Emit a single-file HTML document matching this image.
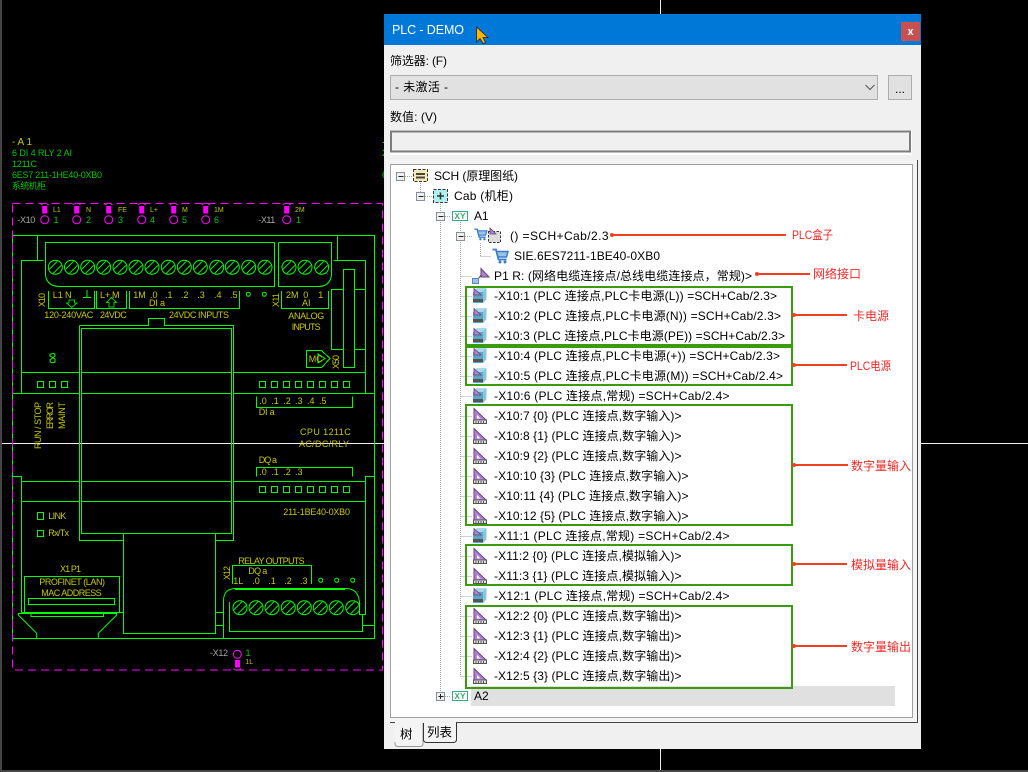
<!DOCTYPE html>
<html><head><meta charset="utf-8"><title>PLC - DEMO</title>
<style>
html,body{margin:0;padding:0;background:#000;width:1028px;height:772px;overflow:hidden}
svg{display:block;position:absolute;left:0;top:0}
text{font-family:"Liberation Sans","Noto Sans CJK SC",sans-serif}
.c text{font-size:9px}
.y{fill:#c8c800}
.g{fill:#00c800}
.t text{font-size:12px;fill:#000}
.r text{font-size:12px;fill:#f02828}
</style></head><body>
<svg width="1028" height="772" viewBox="0 0 1028 772" xmlns="http://www.w3.org/2000/svg">
<defs>
<g id="sc"><circle r="7" fill="none" stroke="#0f0"/><path d="M-6 2L2-6M-2 6L6-2" stroke="#0f0" fill="none"/></g>
<g id="tri"><path d="M1 .5L13 12H1Z" fill="#b57fd6" stroke="#5b4a70"/><path d="M4 7L7.500 10.500H4Z" fill="#fff"/><rect x=".5" y="12" width="13" height="3.500" fill="#e0e0e0" stroke="#555"/><path d="M3 13v2M5.500 13v2M8 13v2M10.500 13v2" stroke="#555"/></g>
<g id="cube"><path d="M0 4L4 0H13.500V11L10 15H0Z" fill="#5aa6c6"/><path d="M0 4L4 0H13.500L10 4Z" fill="#a8d8ea"/><path d="M10 4L13.500 0V11L10 15Z" fill="#8cc4dc"/><path d="M1 .5L8 7H1Z" fill="#b57fd6" stroke="#5b4a70" stroke-width=".8"/><rect x="0" y="11" width="10" height="3" fill="#555"/></g>
<g id="cart"><path d="M.5 1.500H4L6.500 11.500H14.500" fill="none" stroke="#3c7cc4" stroke-width="1.800"/><path d="M4.500 3.500H16L14.500 9H6Z" fill="#9cc2ea" stroke="#3c7cc4" stroke-width="1.500"/><circle cx="8" cy="14" r="1.500" fill="#3c7cc4"/><circle cx="13" cy="14" r="1.500" fill="#3c7cc4"/></g>
<g id="mn"><rect x="-4" y="-4" width="8" height="8" fill="#f0f0f0" stroke="#8a8f96"/><path d="M-2 0H3" stroke="#222"/></g>
<g id="pin"><path d="M-4 1Q0-2.500 4 1" fill="none" stroke="#f0f"/><rect x="-2.500" y="2" width="5" height="7.500" fill="#f0f"/><circle cy="15.700" r="4" fill="none" stroke="#f0f"/></g>
</defs>
<rect width="1028" height="772" fill="#000"/>
<rect width="2" height="772" fill="#454545"/>
<rect y="770" width="1028" height="2" fill="#454545"/>
<path d="M2 443.500H1028M660.500 0V770" stroke="#f0f0f0"/>

<!-- CAD drawing -->
<g class="c" shape-rendering="crispEdges">
<g fill="none" stroke="#0f0">
<path d="M12.500 235.500H374.500V638.500H12.500Z"/>
<path d="M37.500 235.500V260.500M337.500 235.500V260.500"/>
<path d="M43.500 260.500H21.500V393.500M333.500 260.500H365.500V393.500"/>
<path d="M21.500 372.500H79.500M81.500 372.500H231.500M233.500 372.500H365.500"/>
<path d="M12.500 393.500H79.500M81.500 393.500H231.500M233.500 393.500H374.500"/>
<path d="M79.500 325.500H148.500V318.500H164.500V325.500H233.500V540.500H215.500M123.500 540.500H79.500V325.500"/>
<rect x="81.500" y="328.500" width="150" height="205"/>
<path d="M123.500 533.500V633.500H215.500V533.500"/>
<path d="M12.500 476.500H21.500V612.500M374.500 476.500H365.500V614.500H359.500"/>
<path d="M21.500 481.500H79.500M81.500 481.500H231.500M233.500 481.500H365.500M21.500 501.500H79.500M81.500 501.500H231.500M233.500 501.500H365.500"/>
<path d="M274.500 242.500H45.500V275"/><path d="M274.500 242.500V286.500H57"/>
<path d="M278.500 242.500H331.500V275M278.500 242.500V286.500H320"/>
<path d="M48.500 291V308.500H94.500V291M96.500 291V308.500H126.500V291M129.500 291V308.500H239.500V291M281.500 291V308.500H328.500V291"/>
<path d="M87 290V298M83 297.500H91"/>
<rect x="343.500" y="269.500" width="11" height="98"/>
<path d="M343.500 289.500H331.500V349.500H343.500M354.500 289.500H365.500M354.500 349.500H365.500"/>
<path d="M306.500 350.500H321.500L330 358.500L321.500 367.500H306.500Z"/>
<rect x="37.500" y="381.500" width="6" height="6"/><rect x="49.500" y="381.500" width="6" height="6"/><rect x="61.500" y="381.500" width="6" height="6"/>
<rect x="259.500" y="381.500" width="6" height="6"/><rect x="271.500" y="381.500" width="6" height="6"/><rect x="283.500" y="381.500" width="6" height="6"/><rect x="295.500" y="381.500" width="6" height="6"/><rect x="307.500" y="381.500" width="6" height="6"/><rect x="319.500" y="381.500" width="6" height="6"/><rect x="331.500" y="381.500" width="6" height="6"/><rect x="343.500" y="381.500" width="6" height="6"/>
<rect x="259.500" y="486.500" width="6" height="6"/><rect x="271.500" y="486.500" width="6" height="6"/><rect x="283.500" y="486.500" width="6" height="6"/><rect x="295.500" y="486.500" width="6" height="6"/><rect x="307.500" y="486.500" width="6" height="6"/><rect x="319.500" y="486.500" width="6" height="6"/><rect x="331.500" y="486.500" width="6" height="6"/><rect x="343.500" y="486.500" width="6" height="6"/>
<path d="M256.500 396.500V407.500H352.500V396.500M256.500 476.500V467.500H352.500V476.500"/>
<rect x="37.500" y="512.500" width="6" height="7"/><rect x="37.500" y="530.500" width="6" height="6"/>
<path d="M24.500 612V576.500H119.500V612"/>
<rect x="28.500" y="598.500" width="86" height="6"/>
<path d="M21.500 612.500H123.500M215.500 612.500H223.500M215.500 625.500H223.500M223.500 638.500V600"/>
<path d="M229.500 602V631.500H362.500V615M362.500 625.500H374.500"/>
<path d="M232.500 584V565.500H311.500V584"/>
<path d="M235 589.500H345"/>
<path d="M31 613.500V616.500H103.500V613.500"/>
<path d="M18 613.500H117"/>
</g>
<g fill="none" stroke="#0f0" shape-rendering="auto">
<path d="M45.500 275Q47 286.500 60 286.500M331.500 275Q330 286.500 318 286.500M223.500 600Q224 588.500 236 588.500H346Q358 588.500 359.500 602V615"/>
<path d="M18.300 615L36.700 633.300V638.500M116.700 615L98.300 633.300V638.500M18.300 615V613.500M116.700 615V613.500"/>
<path d="M69 300H74.500V303H77L71.700 307.500L66.500 303H69ZM109 307V302.500H106.500L111.500 297.500L116.500 302.500H114V307Z" stroke-width=".8"/>
<circle cx="248.300" cy="294.300" r="2"/><circle cx="264.300" cy="294.300" r="2"/>
<circle cx="320.700" cy="580.300" r="2"/><circle cx="336.700" cy="580.300" r="2"/><circle cx="352.700" cy="580.300" r="2"/>
<path d="M318 354L325 358.500L318 363Z"/>
<path d="M50 354.500Q55 352 55 356L50 360Q50 364 55 362V359L50 356Z" stroke-width="1"/>
</g>
<g shape-rendering="auto">
<use href="#sc" x="55.300" y="267.300"/><use href="#sc" x="71.500" y="267.300"/><use href="#sc" x="87.700" y="267.300"/><use href="#sc" x="103.700" y="267.300"/><use href="#sc" x="120" y="267.300"/><use href="#sc" x="136" y="267.300"/><use href="#sc" x="152" y="267.300"/><use href="#sc" x="168.300" y="267.300"/><use href="#sc" x="184.300" y="267.300"/><use href="#sc" x="200.300" y="267.300"/><use href="#sc" x="216.700" y="267.300"/><use href="#sc" x="232.300" y="267.300"/><use href="#sc" x="248.700" y="267.300"/><use href="#sc" x="265" y="267.300"/>
<use href="#sc" x="289" y="267.300"/><use href="#sc" x="305" y="267.300"/><use href="#sc" x="321.700" y="267.300"/>
<use href="#sc" x="240" y="607.700"/><use href="#sc" x="256" y="607.700"/><use href="#sc" x="272" y="607.700"/><use href="#sc" x="288.300" y="607.700"/><use href="#sc" x="304.300" y="607.700"/><use href="#sc" x="320.300" y="607.700"/><use href="#sc" x="336.300" y="607.700"/><use href="#sc" x="352.700" y="607.700"/>
<use href="#pin" x="44.700" y="204"/><use href="#pin" x="76.700" y="204"/><use href="#pin" x="108.700" y="204"/><use href="#pin" x="141.700" y="204"/><use href="#pin" x="173.700" y="204"/><use href="#pin" x="205.700" y="204"/><use href="#pin" x="286.700" y="204"/>
<circle cx="237.300" cy="654.300" r="4" fill="none" stroke="#f0f"/><rect x="235" y="660" width="5" height="7.500" fill="#f0f"/><path d="M233.500 668.500Q237.300 672 241 668.500" fill="none" stroke="#f0f"/>
</g>
<path d="M12.500 203.500H382.500V670H12.500Z" fill="none" stroke="#f0f" stroke-dasharray="8 5"/>
<g shape-rendering="auto">
<text x="12" y="145" class="y" style="font-size:10px" textLength="20">- A 1</text>
<text x="12" y="156" class="g" textLength="60">6 DI 4 RLY 2 AI</text>
<text x="12" y="167" class="g" textLength="25">1211C</text>
<text x="12" y="178" class="g" textLength="90">6ES7 211-1HE40-0XB0</text>
<text x="12" y="189" class="g" textLength="34">系统机柜</text>
<text x="382" y="145" class="y">-</text><text x="382" y="156" class="g">2</text><text x="382" y="178" class="g">6</text>
<g class="y">
<text x="53" y="212" style="font-size:7px">L1</text><text x="86" y="212" style="font-size:7px">N</text><text x="118" y="212" style="font-size:7px">FE</text><text x="150" y="212" style="font-size:7px">L+</text><text x="182" y="212" style="font-size:7px">M</text><text x="214" y="212" style="font-size:7px">1M</text><text x="295" y="212" style="font-size:7px">2M</text>
</g>
<g class="g"><text x="53.500" y="223">1</text><text x="86" y="223">2</text><text x="118" y="223">3</text><text x="150" y="223">4</text><text x="182" y="223">5</text><text x="214" y="223">6</text><text x="296" y="223">1</text><text x="245.500" y="656">1</text></g>
<g fill="#a8a8a8"><text x="17.300" y="223" textLength="18">-X10</text><text x="258.300" y="223" textLength="17">-X11</text><text x="210" y="656" textLength="18">-X12</text></g>
<text x="245.300" y="664" class="y" style="font-size:7px">1L</text>
<g class="y">
<text x="52.700" y="298">L1</text><text x="65" y="298">N</text><text x="100" y="298">L+</text><text x="112" y="298">M</text>
<text x="133.300" y="298">1M</text><text x="150" y="298">.0</text><text x="165" y="298">.1</text><text x="181" y="298">.2</text><text x="197.300" y="298">.3</text><text x="214" y="298">.4</text><text x="230" y="298">.5</text>
<text x="149" y="306" textLength="16">DI a</text>
<text x="44.300" y="318" textLength="49">120-240VAC</text><text x="100" y="318" textLength="26.700">24VDC</text><text x="169" y="318" textLength="60">24VDC INPUTS</text>
<text x="286" y="298">2M</text><text x="303.300" y="298">0</text><text x="318.300" y="298">1</text><text x="302" y="306">AI</text>
<text x="288.300" y="319" textLength="36">ANALOG</text><text x="291.700" y="330" textLength="29">INPUTS</text>
<text x="308.700" y="362">MC</text>
<text transform="translate(45 307) rotate(-90)" textLength="14">X10</text>
<text transform="translate(279 307) rotate(-90)" textLength="14">X11</text>
<text transform="translate(339 369) rotate(-90)" textLength="14">X50</text>
<text transform="translate(230 580) rotate(-90)" textLength="14">X12</text>
<text transform="translate(41 449) rotate(-90)" textLength="47">RUN / STOP</text>
<text transform="translate(53 429) rotate(-90)" textLength="27">ERROR</text>
<text transform="translate(65 429) rotate(-90)" textLength="27">MAINT</text>
<text x="259.300" y="404">.0</text><text x="271.300" y="404">.1</text><text x="283.300" y="404">.2</text><text x="295" y="404">.3</text><text x="307" y="404">.4</text><text x="319" y="404">.5</text>
<text x="258.700" y="415" textLength="16">DI a</text>
<text x="300" y="435" textLength="50.700">CPU 1211C</text><text x="299" y="447" textLength="50">AC/DC/RLY</text>
<text x="258.700" y="463" textLength="18.300">DQ a</text>
<text x="259.300" y="475">.0</text><text x="271.300" y="475">.1</text><text x="283.300" y="475">.2</text><text x="295" y="475">.3</text>
<text x="283.300" y="515" textLength="66.700">211-1BE40-0XB0</text>
<text x="48.300" y="519" textLength="18">LINK</text><text x="48.300" y="536" textLength="20.700">Rx/Tx</text>
<text x="60" y="572" textLength="21">X1 P1</text><text x="39.300" y="585" textLength="65.700">PROFINET (LAN)</text><text x="41.300" y="596" textLength="60.400">MAC ADDRESS</text>
<text x="238.300" y="564" textLength="66.400">RELAY OUTPUTS</text><text x="248.300" y="574" textLength="19">DQ a</text>
<text x="233.300" y="584">1L</text><text x="252.300" y="584">.0</text><text x="268.300" y="584">.1</text><text x="284.300" y="584">.2</text><text x="300" y="584">.3</text>
</g>
</g>
</g>

<!-- window -->
<rect x="384" y="14" width="537" height="735" fill="#f0f0f0"/>
<rect x="384" y="14" width="537" height="31" fill="#0078d7"/>
<text x="392" y="34" font-size="12.500" fill="#fff" textLength="72">PLC - DEMO</text>
<rect x="901" y="22" width="19" height="19" fill="#c75050"/>
<text x="910.500" y="35" font-size="11" font-weight="bold" fill="#fff" text-anchor="middle">x</text>
<path d="M476.500 27V42L480 38.500L483 43.500L485.500 42.500L483 37.500H488Z" fill="#ffb400" stroke="#222" stroke-width=".8"/>
<rect x="390.500" y="75.500" width="487" height="24" fill="#e1e1e1" stroke="#adadad"/>
<path d="M865.500 85L870 89.500L874.500 85" fill="none" stroke="#555"/>
<rect x="888.500" y="75.500" width="23" height="24" fill="#e1e1e1" stroke="#adadad"/>
<text x="900" y="93" font-size="12" fill="#000" text-anchor="middle">...</text>
<g class="t">
<text x="390" y="65" textLength="57">筛选器: (F)</text>
<text x="395" y="91" textLength="53">- 未激活 -</text>
<text x="390" y="121" textLength="47">数值: (V)</text>
</g>
<rect x="390" y="130" width="522" height="25" fill="#fff"/>
<rect x="391" y="131.500" width="519" height="20" fill="#f0f0f0" stroke="#7c7c7c" stroke-width="2"/>

<!-- tab frame -->
<rect x="386" y="160" width="532" height="562.500" fill="#f4f4f4"/>
<path d="M917.500 160V722.500H456M423 722.500H390" stroke="#444" fill="none"/>
<rect x="390.500" y="164.500" width="522" height="553" fill="#fff" stroke="#a0a0a0"/>
<path d="M395 722V743Q395 746 398 746H420Q423 746 423 743V722Z" fill="#f4f4f4"/>
<path d="M395 742V744Q395 746.500 398 746.500H420Q423 746.500 423 743.500V723" fill="none" stroke="#999"/>
<path d="M423.500 723V739.500Q423.500 742.500 427 742.500H453Q456.500 742.500 456.500 739.500V723" fill="#f4f4f4" stroke="#333"/>
<text x="400" y="738.500" font-size="12.500" fill="#000">树</text>
<text x="427" y="736.500" font-size="12.500" fill="#000">列表</text>

<!-- tree lines -->
<rect x="471" y="686" width="424" height="20" fill="#e0e0e0"/>
<g stroke="#a0a0a0" stroke-dasharray="1 1" fill="none" shape-rendering="crispEdges">
<path d="M420.500 183V192M440.500 204V692M460.500 222V676M480.500 243V256M480.500 256.500H491"/>
<path d="M405 176.500H412M425 196.500H432M445 216.500H451M465 236.500H473M445 696.500H451"/>
<path d="M460.500 276.500H472M460.500 296.500H472M460.500 316.500H472M460.500 336.500H472M460.500 356.500H472M460.500 376.500H472M460.500 396.500H472M460.500 416.500H472M460.500 436.500H472M460.500 456.500H472M460.500 476.500H472M460.500 496.500H472M460.500 516.500H472M460.500 536.500H472M460.500 556.500H472M460.500 576.500H472M460.500 596.500H472M460.500 616.500H472M460.500 636.500H472M460.500 656.500H472M460.500 676.500H472"/>
</g>
<g shape-rendering="crispEdges">
<use href="#mn" x="400.500" y="176.500"/><use href="#mn" x="420.500" y="196.500"/><use href="#mn" x="440.500" y="216.500"/><use href="#mn" x="460.500" y="236.500"/><use href="#mn" x="440.500" y="696.500"/>
<path d="M440.500 694V699" stroke="#222"/>
</g>

<!-- icons -->
<rect x="413.500" y="169.500" width="14" height="12" fill="#fbe9b5" stroke="#333" stroke-dasharray="3 1.500"/>
<rect x="416" y="173" width="9" height="2" fill="#444"/><rect x="416" y="176.500" width="9" height="2" fill="#444"/>
<rect x="433.500" y="189.500" width="14" height="13" fill="#aef0ef" stroke="#333" stroke-dasharray="3 1.500"/>
<path d="M437 196H444M440.500 192.500V199.500" stroke="#333" stroke-width="1.500"/>
<g font-size="8" font-weight="bold" fill="#3aa877">
<rect x="452.500" y="211.500" width="15" height="9" fill="#fff" stroke="#3aa877"/><text x="460" y="219" text-anchor="middle" textLength="11">XY</text>
<rect x="452.500" y="691.500" width="15" height="9" fill="#fff" stroke="#3aa877"/><text x="460" y="699" text-anchor="middle" textLength="11">XY</text>
</g>
<use href="#cart" x="474" y="228" transform="translate(474 228) scale(.8) translate(-474 -228)"/>
<rect x="488.500" y="231.500" width="12" height="11" fill="#ddd" stroke="#333" stroke-dasharray="2.500 1.500"/>
<path d="M490 228L496 234H490Z" fill="#b57fd6" stroke="#5b4a70" stroke-width=".8"/>
<use href="#cart" x="492" y="248"/>
<path d="M481 268.500L489 277H481Z" fill="#b57fd6" stroke="#5b4a70"/><path d="M476 282L481 275" stroke="#444" fill="none"/>
<rect x="472.500" y="278.500" width="6" height="5" fill="#9cc2ea" stroke="#5a86b8"/>
<use href="#cube" x="473" y="288"/><use href="#cube" x="473" y="308"/><use href="#cube" x="473" y="328"/><use href="#cube" x="473" y="348"/><use href="#cube" x="473" y="368"/><use href="#cube" x="473" y="388"/><use href="#cube" x="473" y="528"/><use href="#cube" x="473" y="588"/>
<use href="#tri" x="473" y="408"/><use href="#tri" x="473" y="428"/><use href="#tri" x="473" y="448"/><use href="#tri" x="473" y="468"/><use href="#tri" x="473" y="488"/><use href="#tri" x="473" y="508"/>
<use href="#tri" x="473" y="548"/><use href="#tri" x="473" y="568"/><use href="#tri" x="473" y="608"/><use href="#tri" x="473" y="628"/><use href="#tri" x="473" y="648"/><use href="#tri" x="473" y="668"/>

<!-- tree text -->
<g class="t">
<text x="434" y="180" textLength="84">SCH (原理图纸)</text>
<text x="454" y="200" textLength="59">Cab (机柜)</text>
<text x="474" y="220" textLength="14.500">A1</text>
<text x="510" y="240" textLength="98.500">() =SCH+Cab/2.3</text>
<text x="514" y="260" textLength="146">SIE.6ES7211-1BE40-0XB0</text>
<text x="494" y="280" textLength="258">P1 R: (网络电缆连接点/总线电缆连接点，常规)&gt;</text>
<text x="494" y="300" textLength="283">-X10:1 (PLC 连接点,PLC卡电源(L)) =SCH+Cab/2.3&gt;</text>
<text x="494" y="320" textLength="287">-X10:2 (PLC 连接点,PLC卡电源(N)) =SCH+Cab/2.3&gt;</text>
<text x="494" y="340" textLength="291">-X10:3 (PLC 连接点,PLC卡电源(PE)) =SCH+Cab/2.3&gt;</text>
<text x="494" y="360" textLength="286">-X10:4 (PLC 连接点,PLC卡电源(+)) =SCH+Cab/2.3&gt;</text>
<text x="494" y="380" textLength="289">-X10:5 (PLC 连接点,PLC卡电源(M)) =SCH+Cab/2.4&gt;</text>
<text x="494" y="400" textLength="235.500">-X10:6 (PLC 连接点,常规) =SCH+Cab/2.4&gt;</text>
<text x="494" y="420" textLength="187.500">-X10:7 {0} (PLC 连接点,数字输入)&gt;</text>
<text x="494" y="440" textLength="187.500">-X10:8 {1} (PLC 连接点,数字输入)&gt;</text>
<text x="494" y="460" textLength="187.500">-X10:9 {2} (PLC 连接点,数字输入)&gt;</text>
<text x="494" y="480" textLength="194.500">-X10:10 {3} (PLC 连接点,数字输入)&gt;</text>
<text x="494" y="500" textLength="194.500">-X10:11 {4} (PLC 连接点,数字输入)&gt;</text>
<text x="494" y="520" textLength="194.500">-X10:12 {5} (PLC 连接点,数字输入)&gt;</text>
<text x="494" y="540" textLength="235.500">-X11:1 (PLC 连接点,常规) =SCH+Cab/2.4&gt;</text>
<text x="494" y="560" textLength="187.500">-X11:2 {0} (PLC 连接点,模拟输入)&gt;</text>
<text x="494" y="580" textLength="187.500">-X11:3 {1} (PLC 连接点,模拟输入)&gt;</text>
<text x="494" y="600" textLength="235.500">-X12:1 (PLC 连接点,常规) =SCH+Cab/2.4&gt;</text>
<text x="494" y="620" textLength="187.500">-X12:2 {0} (PLC 连接点,数字输出)&gt;</text>
<text x="494" y="640" textLength="187.500">-X12:3 {1} (PLC 连接点,数字输出)&gt;</text>
<text x="494" y="660" textLength="187.500">-X12:4 {2} (PLC 连接点,数字输出)&gt;</text>
<text x="494" y="680" textLength="187.500">-X12:5 {3} (PLC 连接点,数字输出)&gt;</text>
<text x="474" y="700">A2</text>
</g>

<!-- green boxes -->
<g fill="none" stroke="#3c9a0e" stroke-width="2">
<rect x="466" y="287" width="326" height="58"/>
<rect x="466" y="347" width="326" height="38"/>
<rect x="466" y="405" width="326" height="120"/>
<rect x="466" y="545" width="326" height="40"/>
<rect x="466" y="606" width="326" height="82"/>
</g>

<!-- red arrows -->
<g stroke="#f04020" stroke-width="2" fill="none">
<path d="M612 235H786M757 274H810M794 315H847M794 365H847M794 465H848M794 564H847M794 646H847"/>
</g>
<g fill="#f04020">
<circle cx="612" cy="235" r="2"/><circle cx="757" cy="274" r="2"/><circle cx="794" cy="315" r="2"/><circle cx="794" cy="365" r="2"/><circle cx="794" cy="465" r="2"/><circle cx="794" cy="564" r="2"/><circle cx="794" cy="646" r="2"/>
</g>
<g class="r">
<text x="792" y="239" textLength="41" lengthAdjust="spacingAndGlyphs">PLC盒子</text>
<text x="813" y="278" textLength="48">网络接口</text>
<text x="853" y="320" textLength="36">卡电源</text>
<text x="850" y="370" textLength="41" lengthAdjust="spacingAndGlyphs">PLC电源</text>
<text x="851" y="470" textLength="60">数字量输入</text>
<text x="851" y="569" textLength="60">模拟量输入</text>
<text x="851" y="651" textLength="60">数字量输出</text>
</g>
</svg>
</body></html>
